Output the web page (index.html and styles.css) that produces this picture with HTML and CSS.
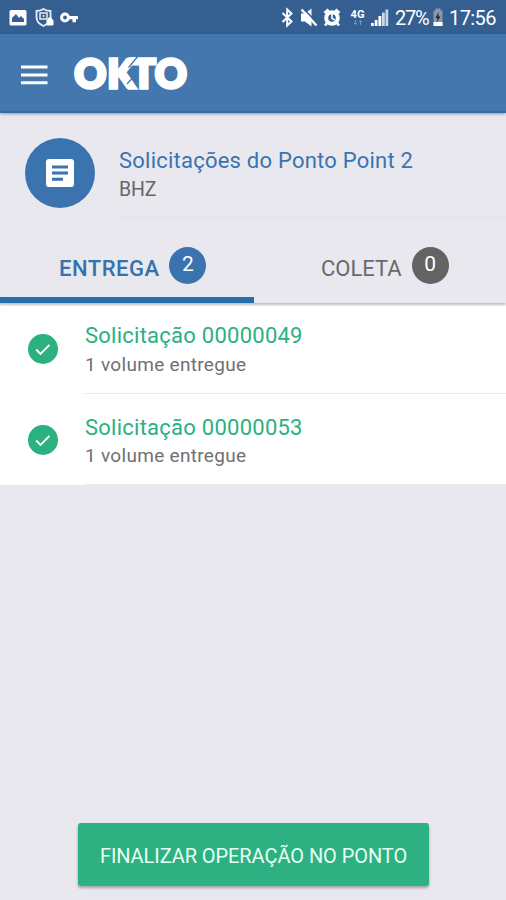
FILE: index.html
```html
<!DOCTYPE html>
<html lang="pt-BR">
<head>
<meta charset="utf-8">
<title>OKTO</title>
<link rel="stylesheet" href="styles.css">
</head>
<body>
<div class="app">
  <div class="statusbar">
    <svg class="status-left" width="82" height="34" viewBox="0 0 82 34">
      <rect x="9.500" y="10" width="17" height="15.500" rx="1.500" fill="#fff"/>
      <path d="M12 22v-4l4-4 3 4 2-2 3 3v3z" fill="#365f91"/>
      <path d="M36.500 11q4 0 7-2 3 2 7 2v6q0 6-7 9-7-3-7-9z" fill="none" stroke="#e8eff6" stroke-width="1.800"/>
      <rect x="40" y="13" width="7" height="6" fill="none" stroke="#e8eff6" stroke-width="1.500"/>
      <circle cx="43.500" cy="16" r="1" fill="#fff"/>
      <path d="M47 20h6v5h-6zM48.500 20v-2h3v2" fill="#fff" stroke="#fff"/>
      <circle cx="65" cy="17.500" r="3.400" fill="none" stroke="#fff" stroke-width="3"/>
      <path d="M68 16h10v3.200h-2v3h-3.500v-3H68z" fill="#fff"/>
    </svg>
    <svg class="status-icons" width="112" height="34" viewBox="280 0 112 34">
      <path d="M282.500 13l9 8.500-4.300 4V9.500l4.300 4-9 8.500" fill="none" stroke="#fff" stroke-width="2"/>
      <path d="M301 13.500h4l6.500-5v18l-6.500-5h-4z" fill="#fff"/>
      <path d="M304 9l13 14" stroke="#365f91" stroke-width="1.600"/>
      <path d="M301.500 9.500l15 16" stroke="#fff" stroke-width="2.400"/>
      <circle cx="332" cy="18" r="5.800" fill="none" stroke="#fff" stroke-width="4"/>
      <path d="M324.500 13l4-3.500M339.500 13l-4-3.500M327 23l-2 2.500M337 23l2 2.500" stroke="#fff" stroke-width="2.800"/>
      <path d="M332 14v4.500l3 1.500" fill="none" stroke="#fff" stroke-width="1.600"/>
      <text x="350.500" y="17.500" class="network" textLength="14" lengthAdjust="spacingAndGlyphs">4G</text>
      <path d="M355.500 20v4.500m-1.500-1.500l1.500 1.500 1.500-1.500M360.500 25v-4.500m-1.500 1.500l1.500-1.500 1.500 1.500" fill="none" stroke="#7896bb"/>
      <path d="M371 23h2.800v3H371zM374.700 20h2.800v6h-2.800zM378.400 16h2.900v10h-2.900z" fill="#fff"/>
      <path d="M382 12.500h2.800V26H382zM385.500 9.500h2.700V26h-2.700z" fill="#cbd7e5"/>
    </svg>
    <span class="percent">27%</span>
    <svg class="battery" width="12" height="34" viewBox="0 0 12 34">
      <path d="M3.500 8.500h5v2h2V26h-9V10.500h2z" fill="#8b98a8"/>
      <path d="M1.500 22h9v4h-9z" fill="#fff"/>
      <path d="M6.500 12l-3 6h2l-.8 4.500 3.800-6H6.500z" fill="#1d2a3a"/>
    </svg>
    <span class="clock">17:56</span>
  </div>

  <header class="appbar">
    <svg class="menu" width="27" height="20" viewBox="0 0 27 20">
      <path d="M0 2h26.500M0 10h26.500M0 17.700h26.500" stroke="#fff" stroke-width="3"/>
    </svg>
    <svg class="logo" width="120" height="50" viewBox="0 0 120 50">
      <text class="logo-text" x="1.500 34.500 59 82" y="39.500">OKTO</text>
      <path d="M66 7L55.500 19.500M54 36l6.500-7" fill="none" stroke="#4377ae" stroke-width="1.300"/>
    </svg>
  </header>

  <section class="point">
    <div class="point-icon">
      <svg width="28" height="28" viewBox="0 0 28 28">
        <rect width="28" height="28" rx="3" fill="#fff"/>
        <path d="M6 8h16M6 14h16M6 20.200h11" stroke="#3b73ae" stroke-width="3"/>
      </svg>
    </div>
    <div class="point-text">
      <h1>Solicitações do Ponto Point 2</h1>
      <p>BHZ</p>
    </div>
  </section>

  <nav class="tabs">
    <div class="tab active"><span class="label">ENTREGA</span><span class="count">2</span></div>
    <div class="tab"><span class="label">COLETA</span><span class="count">0</span></div>
  </nav>

  <main class="list">
    <div class="row">
      <svg class="check" width="30" height="30" viewBox="0 0 30 30"><circle cx="15" cy="15" r="15" fill="#2bb07f"/><path d="M8.200 15.500l4.300 4.300 9-9" fill="none" stroke="#fff" stroke-width="1.900"/></svg>
      <div class="row-text"><h2>Solicitação 00000049</h2><p>1 volume entregue</p></div>
    </div>
    <div class="row">
      <svg class="check" width="30" height="30" viewBox="0 0 30 30"><circle cx="15" cy="15" r="15" fill="#2bb07f"/><path d="M8.200 15.500l4.300 4.300 9-9" fill="none" stroke="#fff" stroke-width="1.900"/></svg>
      <div class="row-text"><h2>Solicitação 00000053</h2><p>1 volume entregue</p></div>
    </div>
  </main>

  <footer class="footer"><button class="finish">FINALIZAR OPERAÇÃO NO PONTO</button></footer>
</div>
</body>
</html>
```
FILE: styles.css
```css
* { box-sizing: border-box; }
body { margin: 0; font-family: Roboto, "Liberation Sans", sans-serif; background: #e8e8ee; }
h1, h2, p { margin: 0; font-weight: 400; white-space: nowrap; }
svg { display: block; flex: none; }
.app { width: 506px; height: 900px; display: flex; flex-direction: column; overflow: hidden; }

.statusbar { height: 34px; flex: none; display: flex; align-items: center; background: #365f91; color: #fff; font-size: 20px; }
.status-icons { margin-left: 198px; }
.network { font: 700 10px Roboto, sans-serif; fill: #fff; }
.percent { width: 38px; margin-left: 3px; padding-top: 2px; letter-spacing: -1.3px; }
.clock { margin-left: 5px; padding-top: 2px; letter-spacing: -0.6px; }
.battery { margin-left: -1px; }

.appbar { position: relative; height: 79px; flex: none; display: flex; align-items: center; background: #4377ae; border-bottom: 2px solid #326ba5; box-shadow: 0 1px 3px rgba(0, 0, 0, .35); }
.menu { margin: 5px 0 0 21px; }
.logo { margin-left: 25px; }
.logo-text { font: 900 39px Lato, sans-serif; fill: #fff; stroke: #fff; stroke-width: 3.5px; }

.point { height: 119px; flex: none; display: flex; padding: 25px 0 0 25px; }
.point-icon { width: 70px; height: 70px; border-radius: 50%; background: #3b73ae; display: flex; align-items: center; justify-content: center; }
.point-text { flex: 1; height: 80px; margin-left: 24px; padding-top: 9px; border-bottom: 1px solid #e0e0e5; }
h1 { font-size: 22px; line-height: 28px; letter-spacing: .23px; color: #3b73b1; }
.point-text p { font-size: 19.5px; line-height: 29px; letter-spacing: -.1px; color: #66666a; }

.tabs { position: relative; height: 71px; flex: none; display: flex; box-shadow: 0 2px 2px rgba(0, 0, 0, .25); }
.tab { width: 252px; display: flex; align-items: flex-start; padding: 14px 0 0 67px; color: #69696d; }
.tab.active { width: 254px; padding-left: 59px; border-bottom: 6px solid #286eae; color: #3472af; }
.label { font-size: 22px; line-height: 46px; }
.tab.active .label { font-weight: 500; letter-spacing: .5px; }
.count { width: 37px; height: 37px; margin: 1px 0 0 10px; border-radius: 50%; background: #636363; color: #fff; font-size: 21px; line-height: 35px; text-align: center; }
.active .count { background: #3b73b0; }

.list { background: #fff; height: 182px; flex: none; }
.row { height: 91px; display: flex; padding-left: 28px; }
.row + .row { padding-top: 1px; }
.check { margin-top: 31px; }
.row + .row .check { margin-top: 30px; }
.row-text { flex: 1; margin-left: 27px; padding-top: 19px; border-bottom: 1px solid #e8e8e8; }
h2 { font-size: 22px; line-height: 28px; letter-spacing: .25px; color: #2bb07f; }
.row-text p { font-size: 19px; line-height: 30px; letter-spacing: .3px; color: #707070; }
.row + .row p { line-height: 28px; }

.footer { margin-top: auto; display: flex; justify-content: center; padding: 0 0 14px 1px; }
.finish { width: 351px; height: 63px; border: 0; border-radius: 3px; padding: 2px 0 0; background: #2db182; color: #e6fff4; font: 400 20px Roboto, sans-serif; letter-spacing: -.07px; white-space: nowrap; box-shadow: 0 2px 3px rgba(0, 0, 0, .3); }
```
